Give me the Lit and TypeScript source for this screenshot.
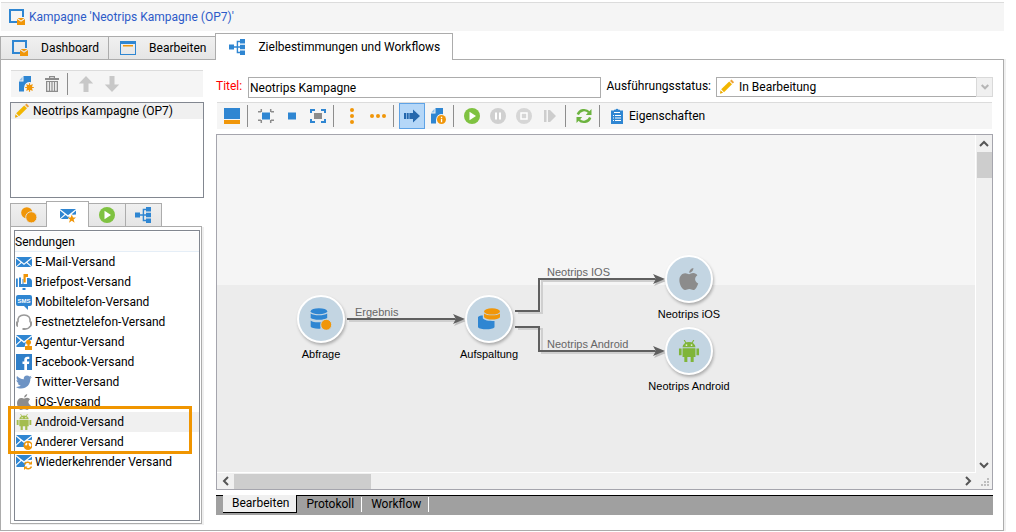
import { LitElement, html, svg, css, nothing } from "lit";
import { customElement, property, state } from "lit/decorators.js";
import { classMap } from "lit/directives/class-map.js";

const BLUE = "#2f86d2";
const ORANGE = "#f09609";
const GREY = "#8c8c8c";

const envelope = svg`
  <path fill=${BLUE} d="M0 3h16l-8 6.4z M0 4.6l4.6 3.7L0 12.6z M16 4.6l-4.6 3.7L16 12.6z M.8 13l4.8-4L8 10.9 10.4 9l4.8 4z"/>`;
const envelopeCut = svg`
  <path fill=${BLUE} d="M0 1h16l-8 6.2z M0 2.6l4.4 3.6L0 10.4z M16 2.4v3.4l-4.6.4z M.4 11.4l5-4.4L8 9l2-1.4L8.6 13H.4z"/>`;
const hierarchy = (x: number) => svg`
  <path fill="none" stroke=${BLUE} stroke-width="1.4" d="M${x} 8h4M11 2.5H8.4v11H11M8.4 8H11"/>
  <path fill=${BLUE} d="M0 5.4h5v5.2H0zM11 0h5v4.6h-5zM11 5.7h5v4.6h-5zM11 11.4h5V16h-5z"/>`;
const campaign = svg`
  <path fill="none" stroke=${BLUE} stroke-width="2" d="M9 13H1V1h13v7"/>
  <path fill=${ORANGE} d="M8 10l4 2.8L16 10v6H8z"/><path fill=${ORANGE} d="M8.6 9h6.8L12 11.6z"/>`;
const documentShape = svg`
  <path fill=${BLUE} d="M5.500 0H13v6.200A5.600 5.600 0 0 0 6 12v3.500H1V5.500h4.500z"/><path fill="#8fc0ea" d="M1.200 4.500L4.500 .8V4.500z"/>`;
const apple = svg`
  <path d="M11.2 0c.1 1.700-1.300 3.400-3 3.500C8 1.900 9.600.2 11.200 0zM8 4.500c.8 0 1.700-.9 3.200-.8 1.200.1 2.200.6 2.900 1.600-2.500 1.600-2 4.800.6 5.900C14 13.300 12.700 16 11.200 16c-1.200 0-1.600-.7-3-.7s-1.900.7-3 .7C3.100 16 1 12 1 8.900 1 5.900 3 3.900 5.200 3.900c1.200 0 2.100.6 2.800.6z"/>`;
const android = svg`
  <path d="M3.300 5.200a4.700 3.700 0 0 1 9.400 0zM3.300 6h9.400v6.300h-1.300V16H9.200v-3.700H6.800V16H4.600v-3.700H3.300zM.7 6.100h1.900v5H.7zM13.400 6.100h1.900v5h-1.900z"/>
  <path fill="none" stroke="currentColor" stroke-width=".8" d="M4.500 0L6 2.500M11.500 0L10 2.500"/>
  <path fill="#fff" d="M5.600 3.200h1.100v1H5.600zM9.300 3.200h1.100v1H9.300z"/>`;

const ICONS: Record<string, unknown> = {
  campaign,
  edit: svg`<path fill=${BLUE} fill-rule="evenodd" d="M0 1h16v14H0zM1 4v10h14V4z"/><path fill=${ORANGE} d="M3 5h10v1.500H3z"/>`,
  hierarchy: hierarchy(4),
  newDoc: svg`${documentShape}<circle cx="11.500" cy="11.500" r="2.800" fill=${ORANGE}/>
    <path stroke=${ORANGE} stroke-width="1.200" d="M11.500 7.200v8.600M7.200 11.500h8.600M8.500 8.500l6 6M14.500 8.500l-6 6"/>`,
  infoDoc: svg`${documentShape}<circle cx="11.500" cy="11.500" r="4.500" fill=${ORANGE}/>
    <path fill="#fff" d="M10.900 8.800h1.300V10h-1.300zM10.900 10.700h1.300v3.500h-1.300z"/>`,
  trash: svg`<path fill=${GREY} fill-rule="evenodd" d="M5 0h6v2h4v2H1V2h4zM6.200 1.200V2h3.600v-.8zM2 5h12v11H2zM3.300 6v8.800h9.400V6z"/>
    <path stroke=${GREY} stroke-width="1.200" d="M5.500 6v9M8 6v9M10.500 6v9"/>`,
  up: svg`<path fill="#c8c8c8" d="M8 0l7.200 7.500H10.500V16h-5V7.500H.8z"/>`,
  down: svg`<path fill="#c8c8c8" d="M8 16L.8 8.500h4.700V0h5v8.500h4.700z"/>`,
  pencil: svg`<path fill="#f2b600" d="M2.200 10.300l8-7.800 2.800 2.800-8 8z"/><path fill="#eda13a" d="M11 1.900L12.500.6l2.600 2.600-1.400 1.400z"/><path fill="#e8a800" d="M1.500 11.200l2.600 2.600L1 14.700z"/>`,
  view: svg`<path fill=${BLUE} d="M0 0h16v11H0z"/><path fill=${ORANGE} d="M0 12h16v4H0z"/>`,
  shrink: svg`<path fill=${BLUE} d="M4 4.500h8v7H4z"/><path fill="none" stroke=${GREY} stroke-width="1.500" d="M0 3.700h3M3.300 1v3M12.700 1v3M13 3.700h3M0 12.300h3M3.300 12v3M12.700 12v3M13 12.300h3"/>`,
  square: svg`<path fill=${BLUE} d="M4 4.500h8v7H4z"/>`,
  expand: svg`<path fill=${GREY} d="M4 5h8v6H4z"/><path fill="none" stroke=${BLUE} stroke-width="2" d="M1 5V2h4M11 2h4v3M15 11v3h-4M5 14H1v-3"/>`,
  dotsV: svg`<g fill=${ORANGE}><circle cx="8" cy="2" r="2"/><circle cx="8" cy="8" r="2"/><circle cx="8" cy="14" r="2"/></g>`,
  dotsH: svg`<g fill=${ORANGE}><circle cx="2" cy="8" r="2"/><circle cx="8" cy="8" r="2"/><circle cx="14" cy="8" r="2"/></g>`,
  forward: svg`<path fill="#2467ad" d="M0 5h2v6H0zM2.700 5h2v6h-2zM5.400 5H9V1.500L16 8l-7 6.500V11H5.400z"/>`,
  play: svg`<circle cx="8" cy="8" r="8" fill="#7fc241"/><path fill="#fff" d="M5.500 3.800L12 8l-6.500 4.200z"/>`,
  pause: svg`<circle cx="8" cy="8" r="8" fill="#d0d0d0"/><path fill="#fff" d="M5 4.500h2v7H5zM9 4.500h2v7H9z"/>`,
  stop: svg`<circle cx="8" cy="8" r="8" fill="#d6d6d6"/><path fill="none" stroke="#fff" stroke-width="1.500" d="M5 5h6v6H5z"/>`,
  step: svg`<path fill="#cdcdcd" d="M2 2h2.500v12H2zM6 2h2v12H6zM8 2l6 6-6 6z"/>`,
  refresh: svg`<path fill="none" stroke="#6cb33f" stroke-width="2.400" d="M1.800 6.500C3.500 1.500 10 .8 13 4.300M14.200 9.500C12.500 14.500 6 15.200 3 11.700"/>
    <path fill="#6cb33f" d="M15.500 1v6H9.800zM.5 15V9h5.700z"/>`,
  clipboard: svg`<path fill=${BLUE} d="M2 2.500h3V1.700h1.500a1.600 1.600 0 0 1 3 0H11v.8h3V16H2z"/><path stroke="#fff" stroke-width="1" d="M5 4.500h6M4 7.500h1M6 7.500h6M4 10h1M6 10h6M4 12.500h1M6 12.500h6"/>`,
  circles: svg`<circle cx="5.800" cy="5.800" r="5.600" fill=${ORANGE}/><circle cx="10.300" cy="10.300" r="5.600" fill=${ORANGE} stroke="#e5e5e5" stroke-width=".9"/>`,
  favMail: svg`<path fill=${BLUE} d="M0 2h16l-8 6.200z M0 3.600l4.600 3.700L0 11.600z M16 3.600v4L13 7.800l-1.300-.6z M.8 12l4.800-4L8 9.900l1.500-1L8 12z"/>
    <path fill=${ORANGE} d="M11.800 7.500l1.200 3h3l-2.400 2 1 3.300-2.800-2-2.800 2 1-3.300L7.600 10.500h3z"/>`,
  mail: envelope,
  letterbox: svg`<path fill=${BLUE} d="M0 4.500h1.800V13H0zM3 3.500h2V10h1.500V5h1v5H11V4h1.500c2.200 0 3.500 1.500 3.500 3.500V13H3zM6.500 14h3v2h-3z"/><path fill=${ORANGE} d="M7.500 0H12v3H9.700v5.500H7.500z"/>`,
  sms: svg`<path fill=${BLUE} d="M2 1h12a2 2 0 0 1 2 2v7a2 2 0 0 1-2 2h-2v4l-4-4H2a2 2 0 0 1-2-2V3a2 2 0 0 1 2-2z"/>
    <text x="8" y="9" text-anchor="middle" font-size="6" font-weight="700" font-family="Liberation Sans, sans-serif" fill="#fff">SMS</text>`,
  headset: svg`<path fill="none" stroke="#999" stroke-width="1.500" d="M2 8.500C1 3.500 4 .9 8 .9s7 2.600 6 7.600M14.300 12c-1 2.300-2.800 3-5.300 3"/><path fill="#999" d="M0 7.500h2V13c-1.300 0-2-1-2-2.500zM16 7.500h-2V13c1.300 0 2-1 2-2.500zM6.500 14h3v2h-3z"/>`,
  agency: svg`${envelopeCut}<circle cx="12.500" cy="8.200" r="2.500" fill=${ORANGE}/><path fill=${ORANGE} d="M11.500 10h2v2H16v4H9v-4h2.500z"/>`,
  facebook: svg`<path fill="#2f7fc9" d="M0 0h16v16H0z"/><path fill="#fff" d="M8.300 16v-6H6.500V7.500h1.800V6c0-2.300 1.200-3.300 3-3.300h2V5H12c-.8 0-1 .4-1 1.100v1.400h2.300L13 10h-2v6z"/>`,
  twitter: svg`<path fill="#6d93c4" d="M16 3.100l-1.700 1.600C14.500 10 10.800 14.500 5.200 14.500 3.300 14.500 1.400 14 0 13c1.700.1 3.300-.3 4.700-1.400-1.500-.1-2.600-1-3-2.300h1.400C1.600 8.900.5 7.600.5 6c.4.3 1 .4 1.500.4C.6 5.300.2 3.500 1 2c1.700 2 4 3.200 6.800 3.300C7.300 3 9 1.500 11 1.500c1 0 1.800.4 2.400 1l2-.7-1.300 1.700z"/>`,
  apple: svg`<g fill=${GREY}>${apple}</g>`,
  android: svg`<g fill="#a4bd4e" color="#a4bd4e">${android}</g>`,
  androidGreen: svg`<g fill="#7fb539" color="#7fb539">${android}</g>`,
  otherMail: svg`${envelopeCut}<circle cx="12" cy="11.500" r="4.500" fill=${ORANGE}/><path fill="#fff" d="M9 10l2-1.500.5 1.500-1.500 2zM12.500 9h1.500l1.500 2-1 2-1.500-1.500z"/>`,
  recurring: svg`${envelopeCut}<path fill="none" stroke=${ORANGE} stroke-width="1.500" d="M8.500 10.500c1-2.700 4.500-3 6-1M15.500 12.500c-1 2.700-4.500 3-6 1"/><path fill=${ORANGE} d="M16 7v3.500h-3.500zM8 16v-3.500h3.500z"/>`,
  database: svg`<g fill=${BLUE}><ellipse cx="6.500" cy="2.300" rx="6" ry="2.200"/><path d="M.5 4c2 1.700 10 1.700 12 0v3.200c-2 1.700-10 1.700-12 0zM.5 9c2 1.700 5 1.500 7.500 1.300L7.500 15C4 15.200 1 14.700.5 13.500z"/></g><circle cx="11.800" cy="12.200" r="4" fill=${ORANGE} stroke="#c3d5e2" stroke-width=".7"/>`,
  split: svg`<path fill=${BLUE} d="M0 6.500C1 5.800 2 5.500 3.500 5.500v2c1 1.500 4 2 8.500 2V14c-1.500 2-10.500 2-12 0z"/>
    <g fill=${ORANGE}><ellipse cx="10.200" cy="2.500" rx="5.800" ry="2.300"/><path d="M4.400 4c2 1.800 9.600 1.800 11.600 0v2.800c-1.600 2.200-10 2.200-11.600 0z"/></g>`,
};

const icon = (name: string, size = 16) => svg`
  <svg class="icon" width=${size} height=${size} viewBox="0 0 16 16" aria-hidden="true">${ICONS[name]}</svg>`;

const base = css`
  :host { display: block; box-sizing: border-box; min-width: 0; }
  *, *::before, *::after { box-sizing: border-box; }
  button, input, select { font: inherit; color: inherit; margin: 0; border-radius: 0; }
  button { border: 0; padding: 0; background: none; text-align: left; }
  ul { list-style: none; margin: 0; padding: 0; }
  .icon { flex: none; display: block; }
`;

type Tool = { icon?: string; label: string; text?: boolean; on?: boolean; off?: boolean };

@customElement("tool-bar")
class ToolBar extends LitElement {
  @property({ attribute: false }) tools: Tool[] = [];
  static styles = [base, css`
    .bar { display: flex; height: 27px; padding-left: 2px; background: #f5f5f5; border-top: 1px solid #dcdcdc; }
    .tool { display: flex; flex: none; align-items: center; justify-content: center; width: 26px; height: 26px; }
    .wide { width: auto; gap: 4px; padding: 0 4px; }
    .on { background: #b5d7f8; border: 1px solid #5fa3e6; }
    .sep { flex: none; width: 1px; height: 22px; margin: 2px 5px 0 2px; background: #8d8d8d; }
  `];
  render() {
    return html`<div class="bar" role="toolbar">${this.tools.map((t) => t.icon
      ? html`<button class=${classMap({ tool: true, wide: !!t.text, on: !!t.on })} aria-label=${t.label} ?disabled=${t.off}>
          ${icon(t.icon)}${t.text ? html`<span>${t.label}</span>` : nothing}</button>`
      : html`<span class="sep"></span>`)}</div>`;
  }
}

const SEP: Tool = { label: "" };

const SIDE_TOOLS: Tool[] = [
  { icon: "newDoc", label: "Neu" }, { icon: "trash", label: "Löschen" }, SEP,
  { icon: "up", label: "Nach oben", off: true }, { icon: "down", label: "Nach unten", off: true },
];

const MAIN_TOOLS: Tool[] = [
  { icon: "view", label: "Ansicht" }, SEP,
  { icon: "shrink", label: "Verkleinern" }, { icon: "square", label: "Originalgröße" }, { icon: "expand", label: "Einpassen" }, SEP,
  { icon: "dotsV", label: "Vertikal ausrichten" }, { icon: "dotsH", label: "Horizontal ausrichten" }, SEP,
  { icon: "forward", label: "Fortschritt", on: true }, { icon: "infoDoc", label: "Protokoll" }, SEP,
  { icon: "play", label: "Starten" }, { icon: "pause", label: "Pause", off: true },
  { icon: "stop", label: "Stopp", off: true }, { icon: "step", label: "Schritt", off: true }, SEP,
  { icon: "refresh", label: "Aktualisieren" }, SEP,
  { icon: "clipboard", label: "Eigenschaften", text: true },
];

const DELIVERIES = [
  ["mail", "E-Mail-Versand"], ["letterbox", "Briefpost-Versand"], ["sms", "Mobiltelefon-Versand"],
  ["headset", "Festnetztelefon-Versand"], ["agency", "Agentur-Versand"], ["facebook", "Facebook-Versand"],
  ["twitter", "Twitter-Versand"], ["apple", "iOS-Versand"], ["android", "Android-Versand"],
  ["otherMail", "Anderer Versand"], ["recurring", "Wiederkehrender Versand"],
];

@customElement("side-panel")
class SidePanel extends LitElement {
  @state() private selected = "Android-Versand";
  static styles = [base, css`
    :host { display: flex; flex-direction: column; }
    tool-bar { margin: 0 1px; }
    .campaigns { flex: none; height: 96px; margin-top: 5px; border: 1px solid #828790; }
    .campaign { display: flex; align-items: center; gap: 3px; width: 100%; height: 16px; padding-left: 3px; background: #f0f0f0; }
    .tabs { display: flex; align-items: flex-end; margin-top: 3px; padding-right: 43px; position: relative; z-index: 1; }
    .tab { display: flex; flex: 1; align-items: center; justify-content: center; height: 23px; margin-right: -1px; border: 1px solid #acacac; border-bottom: 0; background: linear-gradient(#f0f0f0, #e5e5e5); }
    .active { flex: 1.15; height: 26px; margin-bottom: -1px; background: #fff; }
    .pane { flex: 1; display: flex; margin-right: 2px; padding: 3px 1px 2px 3px; border: 1px solid #acacac; box-shadow: 2px 1px 0 #efefef; min-height: 0; }
    .list { flex: 1; position: relative; border: 1px solid #828790; padding: 1px 0; background: #fff; }
    .head { height: 20px; line-height: 20px; background: #fbfbfb; border-bottom: 1px solid #e5eef7; }
    .row { display: flex; align-items: center; gap: 3px; width: 100%; height: 20px; padding-left: 1px; white-space: nowrap; }
    .picked { background: #f0f0f0; }
    .highlight { position: absolute; left: -7px; right: 7px; top: 175px; height: 48px; border: 3px solid #f09500; pointer-events: none; }
  `];
  render() {
    return html`
      <tool-bar .tools=${SIDE_TOOLS}></tool-bar>
      <ul class="campaigns"><li><button class="campaign">${icon("pencil")}<span>Neotrips Kampagne (OP7)</span></button></li></ul>
      <div class="tabs" role="tablist">
        ${["circles", "favMail", "play", "hierarchy"].map((n) => html`
          <button role="tab" aria-label=${n} class=${classMap({ tab: true, active: n === "favMail" })}>${icon(n)}</button>`)}
      </div>
      <div class="pane"><div class="list">
        <div class="head">Sendungen</div>
        <ul>${DELIVERIES.map(([n, label]) => html`<li>
          <button class=${classMap({ row: true, picked: label === this.selected })} @click=${() => (this.selected = label)}>
            ${icon(n)}<span>${label}</span></button></li>`)}</ul>
        <div class="highlight"></div>
      </div></div>`;
  }
}

const NODES = [
  { x: 104, y: 184, icon: "database", size: 22, label: "Abfrage" },
  { x: 272, y: 184, icon: "split", size: 22, label: "Aufspaltung" },
  { x: 472, y: 144, icon: "apple", size: 22, label: "Neotrips iOS" },
  { x: 472, y: 216, icon: "androidGreen", size: 22, label: "Neotrips Android" },
];
const LINKS = [
  { x: 138, y: 170, label: "Ergebnis" },
  { x: 330, y: 130, label: "Neotrips IOS" },
  { x: 330, y: 202, label: "Neotrips Android" },
];

@customElement("workflow-canvas")
class WorkflowCanvas extends LitElement {
  static styles = [base, css`
    :host { display: grid; grid-template: minmax(0, 1fr) 16px / minmax(0, 1fr) 16px; border: 1px solid #a5a5ad; background: #f0f0f0; }
    .canvas { position: relative; overflow: hidden; background: linear-gradient(#f5f5f5 150px, #ececec 150px); border: solid #fff; border-width: 0 1px 1px 0; font: 11px/14px "Liberation Sans", Arial, sans-serif; }
    .wires { position: absolute; left: 0; top: 0; }
    .link { position: absolute; color: #666; white-space: nowrap; }
    .node { position: absolute; display: flex; flex-direction: column; align-items: center; gap: 4px; width: 120px; margin: -24px 0 0 -60px; color: #000; }
    .disc { display: flex; align-items: center; justify-content: center; width: 48px; height: 48px; border: 2px solid #fff; border-radius: 50%; background: #c3d5e2; box-shadow: 1px 2px 3px #0004; }
    .v, .h { display: flex; align-items: center; }
    .v { flex-direction: column; }
    .arrow { display: flex; flex: none; align-items: center; justify-content: center; width: 17px; height: 17px; }
    .thumb { background: #cdcdcd; }
    .v .thumb { width: 15px; height: 26px; }
    .h .thumb { width: 18%; height: 15px; }
    .space { flex: 1; }
    .grip { align-self: end; justify-self: end; }
  `];
  private arrow(label: string, d: string) {
    return html`<button class="arrow" aria-label=${label}>
      <svg width="10" height="10" viewBox="0 0 10 10"><path d=${d} fill="none" stroke="#555" stroke-width="2"/></svg></button>`;
  }
  render() {
    return html`
      <div class="canvas">
        <svg class="wires" width="500" height="300" aria-hidden="true">
          <g fill="none" stroke="#cfcfcf" stroke-width="2" transform="translate(2 2)">
            <path d="M130 184h110M299 176h24v-32h118M299 192h24v24h118"/></g>
          <g fill="none" stroke="#5f5f5f" stroke-width="2">
            <path d="M130 184h110M298 176h24v-32h118M298 192h24v24h118"/></g>
          <path fill="#bdbdbd" d="M249 186l-12-5 3 5-3 5zM449 146l-12-5 3 5-3 5zM449 218l-12-5 3 5-3 5z"/>
          <path fill="#5f5f5f" d="M248 184l-12-5 3 5-3 5zM448 144l-12-5 3 5-3 5zM448 216l-12-5 3 5-3 5z"/>
        </svg>
        ${LINKS.map((l) => html`<span class="link" style="left:${l.x}px;top:${l.y}px">${l.label}</span>`)}
        ${NODES.map((n) => html`<div class="node" style="left:${n.x}px;top:${n.y}px">
          <span class="disc">${icon(n.icon, n.size)}</span><span>${n.label}</span></div>`)}
      </div>
      <div class="v">${this.arrow("Nach oben", "M1 7l4-4 4 4")}<span class="thumb"></span><span class="space"></span>${this.arrow("Nach unten", "M1 3l4 4 4-4")}</div>
      <div class="h">${this.arrow("Nach links", "M7 1L3 5l4 4")}<span class="thumb"></span><span class="space"></span>${this.arrow("Nach rechts", "M3 1l4 4-4 4")}</div>
      <svg class="grip" width="12" height="12" aria-hidden="true"><path fill="#bdbdbd" d="M7 1h2v2H7zM7 4h2v2H7zM4 4h2v2H4zM7 7h2v2H7zM4 7h2v2H4zM1 7h2v2H1z"/></svg>`;
  }
}

@customElement("app-root")
class AppRoot extends LitElement {
  static styles = [base, css`
    :host { display: flex; flex-direction: column; height: 100vh; min-height: 480px; padding: 2px 12px 1px 0; background: #fff; color: #000; font: 12px/16px Roboto, "Segoe UI", sans-serif; }
    .title { display: flex; flex: none; align-items: center; gap: 4px; height: 29px; margin-left: 1px; padding-left: 8px; background: #f5f5f5; border-top: 1px solid #dcdcdc; color: #2d5bc8; }
    .tabs { display: flex; flex: none; align-items: flex-end; height: 28px; position: relative; z-index: 1; }
    .tab { display: flex; align-items: center; gap: 13px; height: 23px; margin-right: -1px; padding: 0 9px 0 11px; border: 1px solid #acacac; border-bottom: 0; background: linear-gradient(#f0f0f0, #e5e5e5); white-space: nowrap; }
    .active { height: 27px; margin-bottom: -1px; padding: 0 12px 0 13px; background: #fff; }
    .body { display: flex; flex: 1; gap: 12px; min-height: 0; padding: 10px 10px 6px 9px; border: 1px solid #acacac; box-shadow: 2px 0 0 #efefef; }
    side-panel { flex: none; width: 194px; }
    .main { display: flex; flex: 1; flex-direction: column; min-width: 0; }
    .form { display: flex; align-items: flex-start; height: 32px; padding-top: 7px; white-space: nowrap; }
    .form label { line-height: 19px; }
    .required { width: 32px; color: #f00; }
    .field { flex: 1; min-width: 0; height: 21px; padding: 0 1px; border: 1px solid #acacac; background: #fff; outline: 0; }
    .status { padding: 0 5px 0 6px; }
    .combo { position: relative; flex: none; width: 277px; height: 20px; }
    .combo select { appearance: none; width: 100%; height: 20px; padding: 0 18px 0 22px; border: 1px solid #acacac; background: #fff; outline: 0; }
    .mark { position: absolute; left: 3px; top: 2px; pointer-events: none; }
    .drop { position: absolute; right: 0; top: 0; display: flex; align-items: center; justify-content: center; width: 17px; height: 20px; border: 1px solid #d9d9d9; background: #f0f0f0; pointer-events: none; }
    .main tool-bar { margin: 0 1px; }
    workflow-canvas { flex: 1; min-height: 0; margin-top: 5px; }
    .views { display: flex; flex: none; height: 20px; margin: 5px 0 9px; padding-left: 7px; background: #a0a0a0; border-top: 1px solid #000; }
    .view { height: 15px; padding: 0 7px 0 9px; line-height: 15px; border-right: 1px solid #fff; margin-top: 1px; }
    .current { height: 18px; margin-top: -1px; background: #f0f0f0; border: solid #000; border-width: 0 1px 1px 0; }
  `];
  render() {
    return html`
      <header class="title">${icon("campaign")}<span>Kampagne 'Neotrips Kampagne (OP7)'</span></header>
      <nav class="tabs" role="tablist">
        <button class="tab" role="tab">${icon("campaign")}<span>Dashboard</span></button>
        <button class="tab" role="tab">${icon("edit")}<span>Bearbeiten</span></button>
        <button class="tab active" role="tab" aria-selected="true">${icon("hierarchy")}<span>Zielbestimmungen und Workflows</span></button>
      </nav>
      <div class="body">
        <side-panel></side-panel>
        <main class="main">
          <div class="form">
            <label class="required" for="name">Titel:</label>
            <input class="field" id="name" value="Neotrips Kampagne">
            <label class="status" for="state">Ausführungsstatus:</label>
            <div class="combo">
              <select id="state"><option>In Bearbeitung</option></select>
              <span class="mark">${icon("pencil")}</span>
              <span class="drop"><svg width="8" height="8" viewBox="0 0 8 8" aria-hidden="true"><path fill="none" stroke="#b5b5b5" stroke-width="2" d="M.7 2L4 5.300 7.300 2"/></svg></span>
            </div>
          </div>
          <tool-bar .tools=${MAIN_TOOLS}></tool-bar>
          <workflow-canvas></workflow-canvas>
          <div class="views" role="tablist">
            <button class="view current" role="tab">Bearbeiten</button>
            <button class="view" role="tab">Protokoll</button>
            <button class="view" role="tab">Workflow</button>
          </div>
        </main>
      </div>`;
  }
}
